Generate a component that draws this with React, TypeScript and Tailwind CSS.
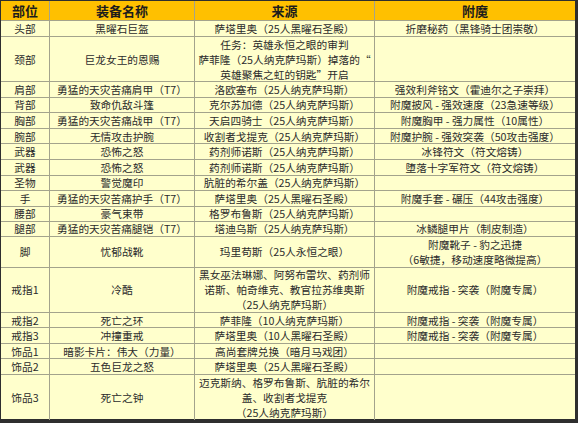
import React from 'react';

type Row = {
  part: string;
  name: string;
  source: string[];
  enchant: string[];
  h: string;
};

const rows: Row[] = [
  { part: '头部', name: '黑曜石巨盔', source: ['萨塔里奥（25人黑曜石圣殿）'], enchant: ['折磨秘药（黑锋骑士团崇敬）'], h: 'h-[16px]' },
  {
    part: '颈部',
    name: '巨龙女王的恩赐',
    source: ['任务：英雄永恒之眼的审判', '萨菲隆（25人纳克萨玛斯）掉落的“', '英雄聚焦之虹的钥匙”开启'],
    enchant: [],
    h: 'h-[45px]',
  },
  { part: '肩部', name: '勇猛的天灾苦痛肩甲（T7）', source: ['洛欧塞布（25人纳克萨玛斯）'], enchant: ['强效利斧铭文（霍迪尔之子崇拜）'], h: 'h-[15.6px]' },
  { part: '背部', name: '致命仇敌斗篷', source: ['克尔苏加德（25人纳克萨玛斯）'], enchant: ['附魔披风 - 强效速度（23急速等级）'], h: 'h-[15.6px]' },
  { part: '胸部', name: '勇猛的天灾苦痛战甲（T7）', source: ['天启四骑士（25人纳克萨玛斯）'], enchant: ['附魔胸甲 - 强力属性（10属性）'], h: 'h-[15.6px]' },
  { part: '腕部', name: '无情攻击护腕', source: ['收割者戈提克（25人纳克萨玛斯）'], enchant: ['附魔护腕 - 强效突袭（50攻击强度）'], h: 'h-[15.6px]' },
  { part: '武器', name: '恐怖之怒', source: ['药剂师诺斯（25人纳克萨玛斯）'], enchant: ['冰锋符文（符文熔铸）'], h: 'h-[15.6px]' },
  { part: '武器', name: '恐怖之怒', source: ['药剂师诺斯（25人纳克萨玛斯）'], enchant: ['堕落十字军符文（符文熔铸）'], h: 'h-[15.6px]' },
  { part: '圣物', name: '警觉魔印', source: ['肮脏的希尔盖（25人纳克萨玛斯）'], enchant: [], h: 'h-[15.6px]' },
  { part: '手', name: '勇猛的天灾苦痛护手（T7）', source: ['萨塔里奥（25人黑曜石圣殿）'], enchant: ['附魔手套 - 碾压（44攻击强度）'], h: 'h-[15.6px]' },
  { part: '腰部', name: '豪气束带', source: ['格罗布鲁斯（25人纳克萨玛斯）'], enchant: [], h: 'h-[15px]' },
  { part: '腿部', name: '勇猛的天灾苦痛腿铠（T7）', source: ['塔迪乌斯（25人纳克萨玛斯）'], enchant: ['冰鳞腿甲片（制皮制造）'], h: 'h-[15px]' },
  { part: '脚', name: '忧郁战靴', source: ['玛里苟斯（25人永恒之眼）'], enchant: ['附魔靴子 - 豹之迅捷', '（6敏捷，移动速度略微提高）'], h: 'h-[31px]' },
  {
    part: '戒指1',
    name: '冷酷',
    source: ['黑女巫法琳娜、阿努布雷坎、药剂师', '诺斯、帕奇维克、教官拉苏维奥斯', '（25人纳克萨玛斯）'],
    enchant: ['附魔戒指 - 突袭（附魔专属）'],
    h: 'h-[45px]',
  },
  { part: '戒指2', name: '死亡之环', source: ['萨菲隆（10人纳克萨玛斯）'], enchant: ['附魔戒指 - 突袭（附魔专属）'], h: 'h-[15.6px]' },
  { part: '戒指3', name: '冲撞重戒', source: ['萨塔里奥（10人黑曜石圣殿）'], enchant: ['附魔戒指 - 突袭（附魔专属）'], h: 'h-[16px]' },
  { part: '饰品1', name: '暗影卡片：伟大（力量）', source: ['高尚套牌兑换（暗月马戏团）'], enchant: [], h: 'h-[15px]' },
  { part: '饰品2', name: '五色巨龙之怒', source: ['萨塔里奥（25人黑曜石圣殿）'], enchant: [], h: 'h-[16px]' },
  {
    part: '饰品3',
    name: '死亡之钟',
    source: ['迈克斯纳、格罗布鲁斯、肮脏的希尔', '盖、收割者戈提克', '（25人纳克萨玛斯）'],
    enchant: [],
    h: 'h-[44.7px]',
  },
];

const Lines = ({ lines }: { lines: string[] }) => (
  <>
    {lines.map((l, i) => (
      <span key={i} className="block whitespace-nowrap">
        {l}
      </span>
    ))}
  </>
);

const cell = 'flex flex-col items-center justify-center text-center border-b border-r border-[#a3a38c] overflow-hidden';

const App: React.FC = () => {
  return (
    <div className="w-[578px] h-[423px] bg-[#2e2e2e] pl-px pt-px pr-[3px] pb-[4px] font-['Noto_Sans_CJK_SC',sans-serif]">
      <div className="w-[574px] h-[418px] bg-[#ffffcc] text-[#2b2b2b] text-[10.7px] leading-[15px]">
        {/* header */}
        <div className="grid grid-cols-[49px_145px_180px_200px] h-[20px] bg-[#ffc000] text-[13px] font-bold text-[#1c1c1c]">
          <div className={cell + ' border-[#8c7a40]'}>部位</div>
          <div className={cell + ' border-[#8c7a40]'}>装备名称</div>
          <div className={cell + ' border-[#8c7a40]'}>来源</div>
          <div className={cell + ' border-r-0 border-[#8c7a40]'}>附魔</div>
        </div>
        {rows.map((r, i) => {
          const last = i === rows.length - 1;
          const b = last ? ' border-b-0' : '';
          return (
            <div key={i} className={'grid grid-cols-[49px_145px_180px_200px] ' + r.h}>
              <div className={cell + b}>{r.part}</div>
              <div className={cell + b}>{r.name}</div>
              <div className={cell + b}>
                <Lines lines={r.source} />
              </div>
              <div className={cell + b + ' border-r-0'}>
                <Lines lines={r.enchant} />
              </div>
            </div>
          );
        })}
      </div>
    </div>
  );
};

export default App;
